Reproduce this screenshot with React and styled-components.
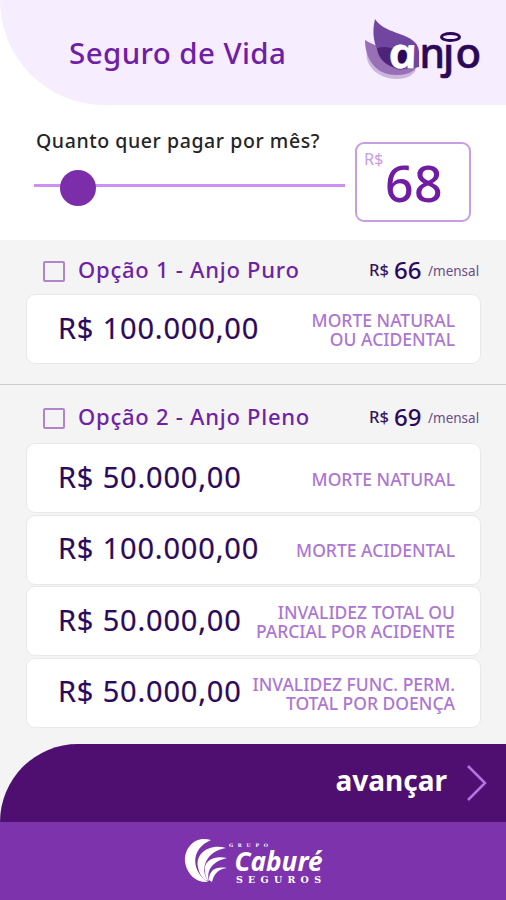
import React, { useState } from 'react'
import styled, { createGlobalStyle } from 'styled-components'

const GlobalStyle = createGlobalStyle`
  * { box-sizing: border-box; }
  body {
    margin: 0;
    background: #fff;
    font-family: "Noto Sans", "Open Sans", sans-serif;
  }
`

const Page = styled.div`
  width: 506px;
  height: 900px;
  display: flex;
  flex-direction: column;
  overflow: hidden;
`

const Header = styled.header`
  height: 105px;
  flex: none;
  display: flex;
  justify-content: space-between;
  background: #f6edff;
  border-bottom-left-radius: 104px 105px;
  padding: 0 24px 0 69px;
`

const Title = styled.h1`
  margin: 0;
  font-size: 29.5px;
  line-height: 105px;
  font-weight: 500;
  letter-spacing: 0.4px;
  color: #6f1fa3;
`

const Picker = styled.section`
  height: 135px;
  flex: none;
  display: flex;
  justify-content: space-between;
  padding: 21px 35px 0 34px;
`

const SliderBlock = styled.div`
  width: 311px;
  display: flex;
  flex-direction: column;
`

const Question = styled.label`
  padding-left: 2px;
  font-size: 19.5px;
  line-height: 29px;
  font-weight: 500;
  letter-spacing: 0.57px;
  white-space: nowrap;
  color: #252527;
`

const Slider = styled.input`
  appearance: none;
  width: 311px;
  height: 36px;
  margin: 15px 0 0;
  background: linear-gradient(#cb91f3, #cb91f3) 0 14px / 100% 3px no-repeat;

  &::-webkit-slider-thumb {
    appearance: none;
    width: 36px;
    height: 36px;
    border-radius: 50%;
    background: #7c2eaa;
  }
`

const AmountBox = styled.div`
  width: 116px;
  height: 80px;
  margin-top: 16px;
  display: flex;
  border: 2px solid #c79ee4;
  border-radius: 9px;
  padding-left: 7px;
`

const AmountCurrency = styled.span`
  width: 21px;
  font-size: 16.5px;
  line-height: 29px;
  letter-spacing: -0.2px;
  color: #c79ee4;
`

const Amount = styled.span`
  font-size: 50px;
  line-height: 78px;
  font-weight: 500;
  letter-spacing: 0.5px;
  color: #701da3;
`

const Options = styled.main`
  height: 504px;
  flex: none;
  background: #f4f4f4;
`

const Option = styled.section`
  height: ${(props) => props.height}px;
  padding: 0 25px 0 26px;
  border-bottom: ${(props) => (props.divided ? '1px solid #cccccc' : 'none')};
`

const OptionHead = styled.div`
  height: ${(props) => props.height}px;
  display: flex;
  align-items: flex-start;
  padding: ${(props) => props.top}px 2px 0 17px;
`

const Check = styled.input`
  appearance: none;
  width: 22px;
  height: 21px;
  margin: 6px 13px 0 0;
  border: 2px solid #b085cb;
  border-radius: 2px;

  &:checked { background: #7c2eaa; }
`

const OptionName = styled.h2`
  flex: 1;
  margin: 0;
  font-size: 22px;
  line-height: 29px;
  font-weight: 500;
  letter-spacing: 0.75px;
  white-space: nowrap;
  color: #7022a4;
`

const Price = styled.div`
  display: flex;
  align-items: flex-start;
  color: #35145e;
`

const Currency = styled.span`
  width: 25px;
  margin-left: -2px;
  font-size: 16.5px;
  line-height: 30px;
  font-weight: 500;
`

const PriceValue = styled.span`
  width: 34px;
  font-size: 24px;
  line-height: 29px;
  font-weight: 500;
  color: #2b0a5b;
`

const Period = styled.span`
  width: 51px;
  font-size: 13.5px;
  line-height: 32px;
  color: #6c4b87;
`

const Cards = styled.div`
  display: flex;
  flex-direction: column;
  gap: 1.5px;
`

const Card = styled.div`
  height: 70px;
  display: flex;
  align-items: center;
  justify-content: space-between;
  padding: 0 25px 0 31px;
  background: #fff;
  border: 1px solid #e9e9e9;
  border-radius: 9px;
`

const Value = styled.strong`
  font-size: 29px;
  line-height: 40px;
  font-weight: 400;
  letter-spacing: 0.82px;
  white-space: nowrap;
  color: #2b0a5b;
  margin-top: -3px;
  -webkit-text-stroke: 0.2px #2b0a5b;
`

const Coverage = styled.span`
  font-size: 17.5px;
  line-height: 19px;
  font-weight: 500;
  text-align: right;
  white-space: pre-line;
  color: #ad76d2;
  margin-top: 2px;
`

const NextBar = styled.div`
  height: 78px;
  flex: none;
  background: #f4f4f4;
`

const NextButton = styled.button`
  width: 100%;
  height: 100%;
  display: flex;
  justify-content: flex-end;
  gap: 19px;
  border: 0;
  border-radius: 78px 0 0 0;
  padding: 16px 18px 0 0;
  background: #4e0f71;
  color: #fff;
  font-family: inherit;
  font-size: 28px;
  line-height: 40px;
  font-weight: 700;
`

const Footer = styled.footer`
  flex: 1;
  background: #7d33ab;
  display: flex;
  justify-content: center;
`

const Logo = styled.svg`
  flex: none;
  margin-top: 14px;
`

function AnjoLogo() {
  return (
    <Logo width="120" height="70" viewBox="362 14 120 70">
      <path d="M367 50 C364 64 376 79 397 79 C407 79 413 75 416 70 L392 58Z" fill="#cdb6de" />
      <path d="M365 40 C365 58 375 76 398 75 C408 75 414 71 417 67 L397 48 C385 48 374 46 365 40Z" fill="#9770b5" />
      <path d="M375 19 C386 36 417 32 419 51 L419 67 L399 70 C386 65 368 48 375 19Z" fill="#7146a0" />
      <path d="M377 48 C388 45 397 48 402 58 L404 69 C389 69 378 60 377 48Z" fill="#4d2478" />
      <circle cx="404" cy="56" r="9" fill="#2c0858" />
      <g fontFamily="Noto Sans, sans-serif" fill="#2c0858" stroke="#2c0858" strokeLinejoin="round" strokeWidth="0.6">
        <text transform="translate(390.5 67.5) skewX(12)" fontStyle="italic" fontWeight="600" fontSize="42" fill="#fff" stroke="#fff" strokeWidth="0.5" textLength="29" lengthAdjust="spacingAndGlyphs">a</text>
        <text x="419.5" y="68" fontSize="42" fontWeight="500" textLength="25.5" lengthAdjust="spacingAndGlyphs">n</text>
        <text x="443" y="68" fontSize="42" fontWeight="500">j</text>
        <text x="455.5" y="68" fontSize="42" fontWeight="500">o</text>
      </g>
      <ellipse cx="450.5" cy="37" rx="9" ry="3.5" fill="#f6edff" stroke="#2c0858" strokeWidth="2.8" />
    </Logo>
  )
}

function CabureLogo() {
  return (
    <Logo width="142" height="52" viewBox="182 836 142 52" fill="#fff">
      <path d="M211 840 C194 835 184 849 185 862 C187 875 197 883 208 882 C191 871 190 849 211 840Z" />
      <path d="M226 848 C209 843 195 854 198 867 C199 874 203 880 208 881 C199 868 207 851 226 848Z" />
      <path d="M227 858 C213 855 203 862 205 871 C205 876 207 880 209 881 C206 870 213 861 227 858Z" />
      <path d="M227 868 C216 866 209 870 209 880 L212 882 C214 874 218 869 227 868Z" />
      <text x="229" y="847" fontFamily="DejaVu Serif, serif" fontWeight="700" fontSize="4.8" textLength="39">GRUPO</text>
      <text x="234.5" y="871" fontFamily="Noto Sans, sans-serif" fontStyle="italic" fontWeight="700" fontSize="26" textLength="88" lengthAdjust="spacingAndGlyphs">Caburé</text>
      <text x="236" y="883" fontFamily="DejaVu Serif, serif" fontWeight="700" fontSize="9.5" textLength="85">SEGUROS</text>
    </Logo>
  )
}

const puro = [{ value: 'R$ 100.000,00', coverage: 'MORTE NATURAL\nOU ACIDENTAL' }]

const pleno = [
  { value: 'R$ 50.000,00', coverage: 'MORTE NATURAL' },
  { value: 'R$ 100.000,00', coverage: 'MORTE ACIDENTAL' },
  { value: 'R$ 50.000,00', coverage: 'INVALIDEZ TOTAL OU\nPARCIAL POR ACIDENTE' },
  { value: 'R$ 50.000,00', coverage: 'INVALIDEZ FUNC. PERM.\nTOTAL POR DOENÇA' },
]

function Plan({ name, price, items, height, headHeight, top, divided }) {
  return (
    <Option height={height} divided={divided}>
      <OptionHead height={headHeight} top={top}>
        <Check type="checkbox" aria-label={name} />
        <OptionName>{name}</OptionName>
        <Price>
          <Currency>R$</Currency>
          <PriceValue>{price}</PriceValue>
          <Period>/mensal</Period>
        </Price>
      </OptionHead>
      <Cards>
        {items.map((item, i) => (
          <Card key={i}>
            <Value>{item.value}</Value>
            <Coverage>{item.coverage}</Coverage>
          </Card>
        ))}
      </Cards>
    </Option>
  )
}

export default function App() {
  const [amount, setAmount] = useState(68)

  return (
    <>
      <GlobalStyle />
      <Page>
        <Header>
          <Title>Seguro de Vida</Title>
          <AnjoLogo />
        </Header>
        <Picker>
          <SliderBlock>
            <Question htmlFor="amount">Quanto quer pagar por mês?</Question>
            <Slider id="amount" type="range" min="40" max="336" value={amount} onChange={(e) => setAmount(Number(e.target.value))} />
          </SliderBlock>
          <AmountBox>
            <AmountCurrency>R$</AmountCurrency>
            <Amount>{amount}</Amount>
          </AmountBox>
        </Picker>
        <Options>
          <Plan name="Opção 1 - Anjo Puro" price="66" items={puro} height={145} headHeight={54} top={15} divided />
          <Plan name="Opção 2 - Anjo Pleno" price="69" items={pleno} height={359} headHeight={58} top={17} />
        </Options>
        <NextBar>
          <NextButton>
            avançar
            <svg width="22" height="46" viewBox="0 0 22 46" fill="none" stroke="#b574e2" strokeWidth="2.5">
              <path d="M2 6 L19 23 L2 40" />
            </svg>
          </NextButton>
        </NextBar>
        <Footer>
          <CabureLogo />
        </Footer>
      </Page>
    </>
  )
}
